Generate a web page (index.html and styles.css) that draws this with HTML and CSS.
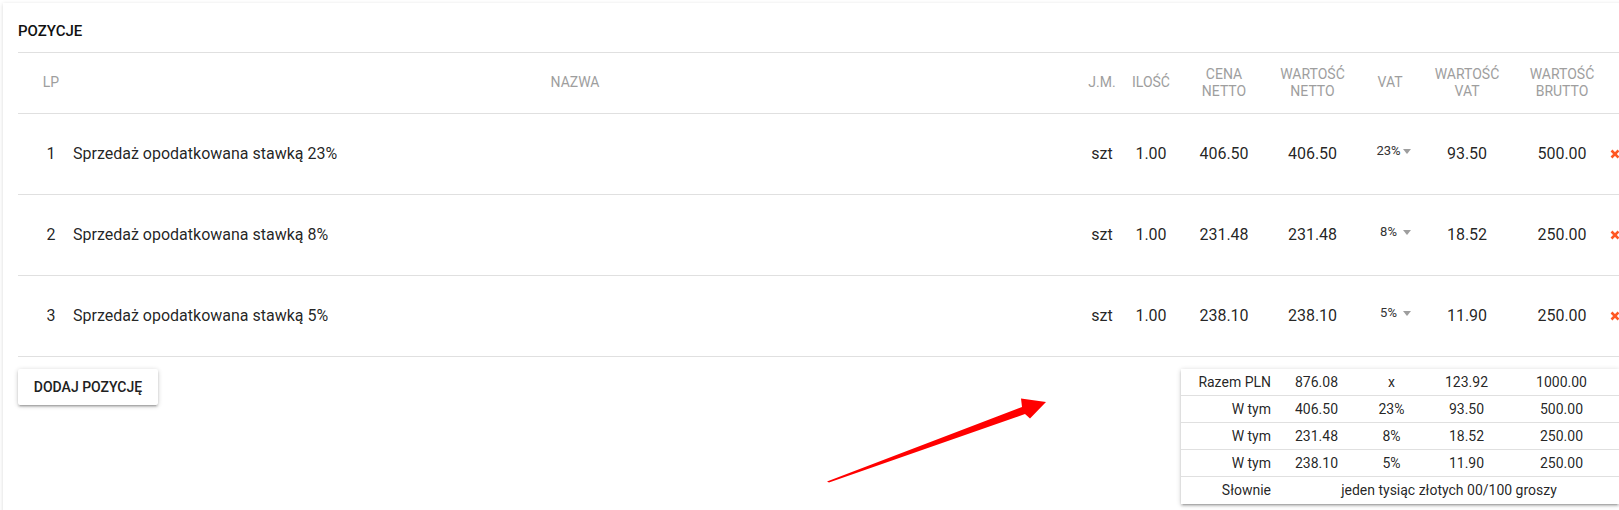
FILE: index.html
```html
<!DOCTYPE html>
<html lang="pl">
<head>
    <meta charset="UTF-8">
    <title>Pozycje faktury</title>
    <link rel="stylesheet" href="styles.css">
</head>
<body>
    <div class="page">
        <div class="card">
            <div class="card-title">POZYCJE</div>

            <table class="items">
                <colgroup>
                    <col class="col-lp">
                    <col class="col-name">
                    <col class="col-jm">
                    <col class="col-qty">
                    <col class="col-price">
                    <col class="col-net">
                    <col class="col-vat">
                    <col class="col-vatval">
                    <col class="col-gross">
                    <col class="col-del">
                </colgroup>
                <thead>
                    <tr>
                        <th class="lp">LP</th>
                        <th>Nazwa</th>
                        <th>J.M.</th>
                        <th>Ilość</th>
                        <th>Cena<br>netto</th>
                        <th>Wartość<br>netto</th>
                        <th>VAT</th>
                        <th>Wartość<br>VAT</th>
                        <th class="gross">Wartość<br>brutto</th>
                        <th></th>
                    </tr>
                </thead>
                <tbody>
                    <tr>
                        <td class="lp">1</td>
                        <td class="name">Sprzedaż opodatkowana stawką 23%</td>
                        <td>szt</td>
                        <td>1.00</td>
                        <td>406.50</td>
                        <td>406.50</td>
                        <td><span class="vat-select">23%<span class="caret"></span></span></td>
                        <td>93.50</td>
                        <td class="gross">500.00</td>
                        <td class="del"><svg width="10" height="10" viewBox="0 0 10 10"><path d="M1.5 1.5 L8.5 8.5 M8.5 1.5 L1.5 8.5" stroke="#ff5722" stroke-width="2.6"/></svg></td>
                    </tr>
                    <tr>
                        <td class="lp">2</td>
                        <td class="name">Sprzedaż opodatkowana stawką 8%</td>
                        <td>szt</td>
                        <td>1.00</td>
                        <td>231.48</td>
                        <td>231.48</td>
                        <td><span class="vat-select">8%<span class="caret"></span></span></td>
                        <td>18.52</td>
                        <td class="gross">250.00</td>
                        <td class="del"><svg width="10" height="10" viewBox="0 0 10 10"><path d="M1.5 1.5 L8.5 8.5 M8.5 1.5 L1.5 8.5" stroke="#ff5722" stroke-width="2.6"/></svg></td>
                    </tr>
                    <tr>
                        <td class="lp">3</td>
                        <td class="name">Sprzedaż opodatkowana stawką 5%</td>
                        <td>szt</td>
                        <td>1.00</td>
                        <td>238.10</td>
                        <td>238.10</td>
                        <td><span class="vat-select">5%<span class="caret"></span></span></td>
                        <td>11.90</td>
                        <td class="gross">250.00</td>
                        <td class="del"><svg width="10" height="10" viewBox="0 0 10 10"><path d="M1.5 1.5 L8.5 8.5 M8.5 1.5 L1.5 8.5" stroke="#ff5722" stroke-width="2.6"/></svg></td>
                    </tr>
                </tbody>
            </table>

            <div class="items-footer">
                <button class="add-btn">Dodaj pozycję</button>

                <table class="summary">
                    <colgroup>
                        <col class="s-label">
                        <col class="s-num">
                        <col class="s-num">
                        <col class="s-num">
                        <col class="s-wide">
                    </colgroup>
                    <tr>
                        <td class="label">Razem PLN</td>
                        <td>876.08</td>
                        <td>x</td>
                        <td>123.92</td>
                        <td>1000.00</td>
                    </tr>
                    <tr>
                        <td class="label">W tym</td>
                        <td>406.50</td>
                        <td>23%</td>
                        <td>93.50</td>
                        <td>500.00</td>
                    </tr>
                    <tr>
                        <td class="label">W tym</td>
                        <td>231.48</td>
                        <td>8%</td>
                        <td>18.52</td>
                        <td>250.00</td>
                    </tr>
                    <tr>
                        <td class="label">W tym</td>
                        <td>238.10</td>
                        <td>5%</td>
                        <td>11.90</td>
                        <td>250.00</td>
                    </tr>
                    <tr>
                        <td class="label">Słownie</td>
                        <td colspan="4">jeden tysiąc złotych 00/100 groszy</td>
                    </tr>
                </table>
            </div>
        </div>

        <!-- annotation arrow drawn over the screenshot -->
        <svg class="annotation" width="1619" height="510" viewBox="0 0 1619 510">
            <polygon points="827,478.5 1022,404 1021,395.5 1046,399 1030,415.5 1025,411 829,479.5" fill="#ff0000"/>
        </svg>
    </div>
</body>
</html>
```

FILE: styles.css
```css
* {
    margin: 0;
    padding: 0;
    box-sizing: border-box;
}

body {
    width: 1619px;
    height: 510px;
    font-family: Roboto, 'Liberation Sans', Arial, sans-serif;
    color: rgba(0, 0, 0, 0.87);
    background: #fff;
    overflow: hidden;
}

.page {
    position: relative;
    width: 100%;
    height: 100%;
}

/* Card */
.card {
    width: 1632px;
    margin: 3px 0 0 3px;
    padding: 18px 16px 30px 15px;
    background: #fff;
    box-shadow: 0 1px 4px rgba(0, 0, 0, 0.16);
}

.card-title {
    font-size: 15px;
    font-weight: 500;
    line-height: 20px;
    color: #111;
    padding-bottom: 11px;
    border-bottom: 1px solid #e0e0e0;
}

/* Items table */
.items {
    width: 1601px;
    table-layout: fixed;
    border-collapse: collapse;
}

.col-lp { width: 50px; }
.col-name { width: 1014px; }
.col-jm { width: 40px; }
.col-qty { width: 58px; }
.col-price { width: 88px; }
.col-net { width: 89px; }
.col-vat { width: 66px; }
.col-vatval { width: 88px; }
.col-gross { width: 94px; }
.col-del { width: 14px; }

.items th {
    height: 60px;
    font-size: 14px;
    font-weight: 400;
    line-height: 17px;
    color: #9e9e9e;
    text-transform: uppercase;
    text-align: center;
    vertical-align: middle;
    white-space: nowrap;
}

.items tr {
    border-bottom: 1px solid #e0e0e0;
}

.items td {
    height: 81px;
    font-size: 16px;
    text-align: center;
    vertical-align: middle;
    white-space: nowrap;
}

.items .lp {
    padding-left: 16px;
}

.items td.name {
    text-align: left;
    padding-left: 5px;
}

.items .gross {
    padding-left: 8px;
}

.items td.del {
    text-align: left;
    padding-left: 5px;
}

.items td.del svg {
    display: block;
}

/* VAT select */
.vat-select {
    position: relative;
    display: inline-block;
    width: 42px;
    padding-right: 3px;
    font-size: 13px;
    line-height: 16px;
    color: #333;
    text-align: center;
    vertical-align: 5px;
}

.caret {
    position: absolute;
    right: 0;
    top: 6px;
    width: 0;
    height: 0;
    border-left: 4.5px solid transparent;
    border-right: 4.5px solid transparent;
    border-top: 5px solid #9e9e9e;
}

/* Footer: add button + totals */
.items-footer {
    display: flex;
    align-items: flex-start;
    margin-top: 12px;
}

.add-btn {
    width: 140px;
    height: 36px;
    font-family: inherit;
    font-size: 14px;
    font-weight: 500;
    color: #212121;
    text-transform: uppercase;
    background: #fff;
    border: none;
    border-radius: 2px;
    box-shadow: 0 2px 2px 0 rgba(0, 0, 0, 0.14), 0 3px 1px -2px rgba(0, 0, 0, 0.12), 0 1px 5px 0 rgba(0, 0, 0, 0.2);
    cursor: pointer;
}

.summary {
    width: 438px;
    margin-left: auto;
    table-layout: fixed;
    border-collapse: collapse;
    background: #fff;
    box-shadow: 0 2px 2px 0 rgba(0, 0, 0, 0.14), 0 3px 1px -2px rgba(0, 0, 0, 0.12), 0 1px 5px 0 rgba(0, 0, 0, 0.2);
}

.s-label { width: 98px; }
.s-num { width: 75px; }
.s-wide { width: 115px; }

.summary tr {
    border-bottom: 1px solid #e0e0e0;
}

.summary tr:last-child {
    border-bottom: none;
}

.summary td {
    height: 27px;
    font-size: 14px;
    text-align: center;
    vertical-align: middle;
    white-space: nowrap;
}

.summary td.label {
    text-align: right;
    padding-right: 8px;
}

/* Annotation */
.annotation {
    position: absolute;
    left: 0;
    top: 0;
    pointer-events: none;
}
```
